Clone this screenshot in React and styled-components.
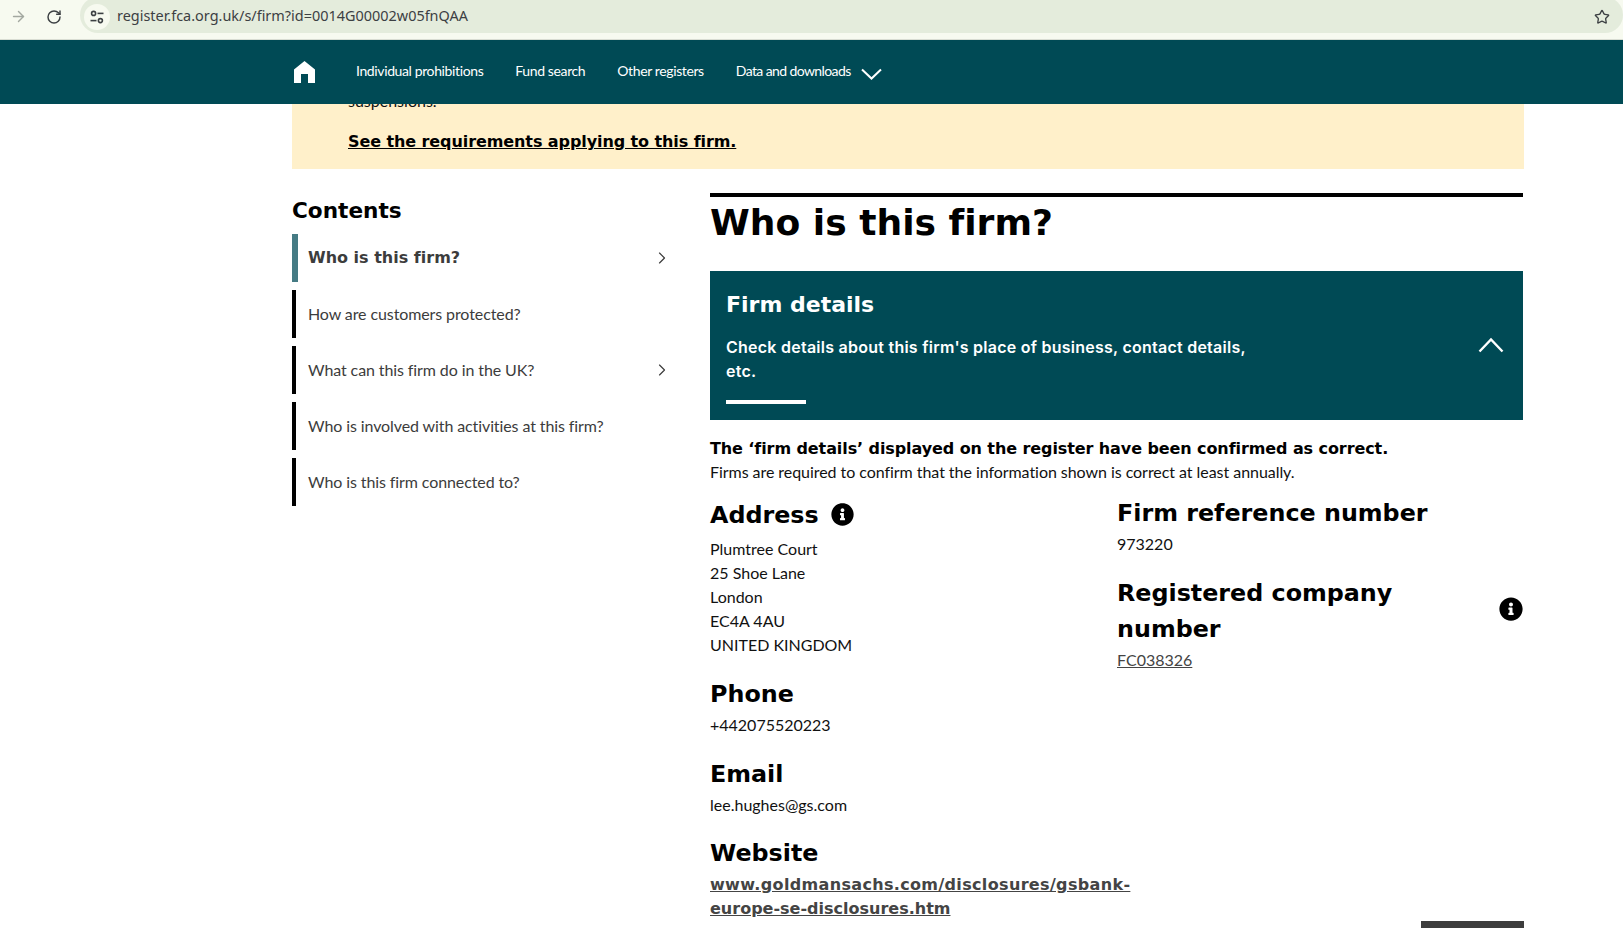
import React from "react"
import styled, { createGlobalStyle, css } from "styled-components"
import { FaInfoCircle } from "react-icons/fa"
import { ArrowRight, ChevronRight, RotateCw, Star } from "lucide-react"

const GlobalStyle = createGlobalStyle`
  html, body {
    margin: 0;
    height: 928px;
    overflow: hidden;
    background: #fff;
  }
`

const wideBold = css`
  font-family: "DejaVu Sans", sans-serif;
  font-weight: bold;
  font-variant-ligatures: none;
`

const Toolbar = styled.div`
  height: 39px;
  background: #f7faf0;
  border-bottom: 1px solid #d9ddd3;
  display: flex;
  align-items: flex-start;
  padding-left: 8px;
`
const ToolButton = styled.div`
  width: 20px;
  height: 33px;
  margin-right: ${(p) => p.$gap}px;
  display: flex;
  align-items: center;
  justify-content: center;
  color: ${(p) => p.$color};
`
const Omnibox = styled.div`
  flex: 1;
  height: 36px;
  box-sizing: border-box;
  margin-top: -3px;
  background: #e4ecdc;
  border-radius: 18px;
  display: flex;
  align-items: center;
  padding: 3px 13px 0 4px;
`
const TuneBadge = styled.div`
  width: 26px;
  height: 26px;
  border-radius: 50%;
  background: #f7faf0;
  display: flex;
  align-items: center;
  justify-content: center;
  margin-right: 7px;
`
const Url = styled.span`
  flex: 1;
  margin-top: -2px;
  font: 14.45px "Noto Sans", sans-serif;
  color: #3c4043;
`

const Nav = styled.nav`
  height: 64px;
  background: #004a55;
  display: flex;
  align-items: center;
  padding-left: 294px;
`
const HomeLink = styled.a`
  display: flex;
  width: 62px;
`
const NavItem = styled.a`
  font: 14px/20px Lato, sans-serif;
  color: #fff;
  margin-right: 32px;
  margin-top: -2px;
  letter-spacing: ${(p) => (p.$tight ? "-0.6px" : "-0.38px")};
`
const NavChevron = styled.svg`
  margin-left: -22px;
  margin-top: 4px;
`

const Page = styled.div`
  width: 1232px;
  margin-left: 292px;
`
const Banner = styled.div`
  height: 65px;
  background: #fff0ca;
  overflow: hidden;
  padding-left: 56px;
`
const BannerText = styled.div`
  font: 16px/24px Lato, sans-serif;
  color: #111;
  margin-top: -15px;
`
const BannerLink = styled.a`
  display: block;
  margin-top: 17px;
  ${wideBold}
  font-size: 16px;
  line-height: 24px;
  letter-spacing: -0.09px;
  color: #000;
  text-decoration: underline;
`

const Columns = styled.div`
  display: grid;
  grid-template-columns: 418px 813px;
`
const Sidebar = styled.aside`
  padding-top: 27px;
`
const ContentsTitle = styled.h2`
  margin: 0 0 8px;
  ${wideBold}
  font-size: 21.6px;
  line-height: 30px;
  color: #000;
`
const SideList = styled.div`
  width: 380px;
  display: flex;
  flex-direction: column;
  gap: 8px;
`
const SideItem = styled.a`
  height: 48px;
  box-sizing: border-box;
  display: flex;
  align-items: center;
  justify-content: space-between;
  border-left: ${(p) => (p.$active ? "6px solid #457b84" : "4px solid #000")};
  padding-left: ${(p) => (p.$active ? 10 : 12)}px;
  color: #3c3c3c;
  ${(p) =>
    p.$active
      ? css`
          ${wideBold}
          font-size: 16px;
          line-height: 26px;
        `
      : css`
          font: 16px/24px Lato, sans-serif;
          letter-spacing: -0.1px;
        `}
`

const Main = styled.main`
  margin-top: 24px;
  border-top: 4px solid #000;
`
const PageTitle = styled.h1`
  margin: 0 0 22px;
  ${wideBold}
  font-size: 36.1px;
  line-height: 52px;
  color: #000;
`
const Panel = styled.section`
  height: 149px;
  box-sizing: border-box;
  background: #004a55;
  color: #fff;
  display: flex;
  align-items: center;
  justify-content: space-between;
  padding: 19px 19px 16px 16px;
`
const PanelText = styled.div`
  width: 540px;
`
const PanelTitle = styled.h2`
  margin: 0;
  ${wideBold}
  font-size: 22px;
  line-height: 30px;
`
const PanelBlurb = styled.p`
  margin: 15px 0 0;
  font: 600 16px/24px Inter, sans-serif;
  letter-spacing: 0.25px;
`
const PanelRule = styled.div`
  width: 80px;
  height: 4px;
  margin-top: 17px;
  background: #fff;
`
const PanelChevron = styled.svg`
  margin-bottom: 5px;
`
const Intro = styled.div`
  margin: 17px 0 12px;
`
const IntroStrong = styled.div`
  ${wideBold}
  font-size: 16px;
  line-height: 24px;
  letter-spacing: -0.09px;
  color: #000;
  margin-bottom: -1px;
`
const IntroNote = styled.div`
  font: 16px/24px Lato, sans-serif;
  letter-spacing: -0.05px;
  color: #111;
`
const DetailGrid = styled.div`
  display: grid;
  grid-template-columns: 407px 406px;
`
const DetailColumn = styled.div`
  margin-top: ${(p) => p.$offset}px;
`
const Field = styled.div`
  margin-bottom: ${(p) => p.$bottom || 19}px;
`
const FieldHeading = styled.h3`
  margin: 0;
  ${wideBold}
  font-size: 23.8px;
  line-height: 36px;
  color: #000;
  display: flex;
  align-items: center;
  gap: ${(p) => p.$gap || 0}px;
  justify-content: ${(p) => (p.$spread ? "space-between" : "flex-start")};
`
const InfoIcon = styled(FaInfoCircle)`
  margin-bottom: ${(p) => p.$lift}px;
`
const FieldValue = styled.div`
  margin-top: ${(p) => p.$top || 1}px;
  font: 16px/24px Lato, sans-serif;
  color: #111;
`
const ValueLink = styled.a`
  color: #444;
  text-decoration: underline;
`
const WebLink = styled.a`
  display: block;
  margin-top: 2px;
  ${wideBold}
  font-size: 16px;
  line-height: 24px;
  color: #444;
  text-decoration: underline;
`
const WebLine = styled.span`
  display: block;
  letter-spacing: ${(p) => p.$spacing || 0}px;
`
const BackToTop = styled.div`
  position: fixed;
  left: 1421px;
  top: 921px;
  width: 103px;
  height: 7px;
  background: #3d3d3d;
`

const sideItems = [
  { label: "Who is this firm?", active: true, more: true },
  { label: "How are customers protected?" },
  { label: "What can this firm do in the UK?", more: true },
  { label: "Who is involved with activities at this firm?" },
  { label: "Who is this firm connected to?" },
]

const TuneIcon = () => (
  <svg width="14" height="14" viewBox="0 0 14 14" fill="none" stroke="#3c4043" strokeWidth="1.6">
    <circle cx="3.6" cy="3.4" r="2" />
    <path d="M7.5 3.4h6" />
    <circle cx="10.4" cy="10.6" r="2" />
    <path d="M0.5 10.6h6" />
  </svg>
)

const HomeIcon = () => (
  <svg width="21" height="22" viewBox="0 0 21 22" fill="#fff">
    <path d="M10.5 0 L21 8.5 V22 H14 V13 H7 V22 H0 V8.5 Z" />
  </svg>
)

const App = () => {
  return (
    <>
      <GlobalStyle />
      <Toolbar>
        <ToolButton $gap={16} $color="#a3a8a0">
          <ArrowRight size={17} strokeWidth={2} />
        </ToolButton>
        <ToolButton $gap={16} $color="#3c4043">
          <RotateCw size={16} strokeWidth={2.2} />
        </ToolButton>
        <Omnibox>
          <TuneBadge>
            <TuneIcon />
          </TuneBadge>
          <Url>register.fca.org.uk/s/firm?id=0014G00002w05fnQAA</Url>
          <Star size={16} strokeWidth={2} color="#3c4043" />
        </Omnibox>
      </Toolbar>
      <Nav>
        <HomeLink>
          <HomeIcon />
        </HomeLink>
        <NavItem>Individual prohibitions</NavItem>
        <NavItem>Fund search</NavItem>
        <NavItem>Other registers</NavItem>
        <NavItem $tight>Data and downloads</NavItem>
        <NavChevron width="21" height="12" viewBox="0 0 21 12" fill="none" stroke="#fff" strokeWidth="2">
          <path d="M1 1.5 L10.5 10.5 L20 1.5" />
        </NavChevron>
      </Nav>
      <Page>
        <Banner>
          <BannerText>suspensions.</BannerText>
          <BannerLink>See the requirements applying to this firm.</BannerLink>
        </Banner>
        <Columns>
          <Sidebar>
            <ContentsTitle>Contents</ContentsTitle>
            <SideList>
              {sideItems.map((item) => (
                <SideItem key={item.label} $active={item.active}>
                  {item.label}
                  {item.more && <ChevronRight size={20} strokeWidth={1.4} color="#3c3c3c" />}
                </SideItem>
              ))}
            </SideList>
          </Sidebar>
          <Main>
            <PageTitle>Who is this firm?</PageTitle>
            <Panel>
              <PanelText>
                <PanelTitle>Firm details</PanelTitle>
                <PanelBlurb>Check details about this firm's place of business, contact details, etc.</PanelBlurb>
                <PanelRule />
              </PanelText>
              <PanelChevron width="26" height="16" viewBox="0 0 26 16" fill="none" stroke="#fff" strokeWidth="2.4">
                <path d="M1.5 14.5 L13 2.5 L24.5 14.5" />
              </PanelChevron>
            </Panel>
            <Intro>
              <IntroStrong>The ‘firm details’ displayed on the register have been confirmed as correct.</IntroStrong>
              <IntroNote>Firms are required to confirm that the information shown is correct at least annually.</IntroNote>
            </Intro>
            <DetailGrid>
              <DetailColumn $offset={1}>
                <Field>
                  <FieldHeading $gap={12}>
                    Address <InfoIcon size={23} $lift={2} />
                  </FieldHeading>
                  <FieldValue $top={4}>
                    Plumtree Court
                    <br />
                    25 Shoe Lane
                    <br />
                    London
                    <br />
                    EC4A 4AU
                    <br />
                    UNITED KINGDOM
                  </FieldValue>
                </Field>
                <Field>
                  <FieldHeading>Phone</FieldHeading>
                  <FieldValue>+442075520223</FieldValue>
                </Field>
                <Field $bottom={18}>
                  <FieldHeading>Email</FieldHeading>
                  <FieldValue>lee.hughes@gs.com</FieldValue>
                </Field>
                <Field>
                  <FieldHeading>Website</FieldHeading>
                  <WebLink>
                    <WebLine $spacing={0.34}>www.goldmansachs.com/disclosures/gsbank-</WebLine>
                    <WebLine>europe-se-disclosures.htm</WebLine>
                  </WebLink>
                </Field>
              </DetailColumn>
              <DetailColumn $offset={-1}>
                <Field>
                  <FieldHeading>Firm reference number</FieldHeading>
                  <FieldValue>973220</FieldValue>
                </Field>
                <Field>
                  <FieldHeading $spread>
                    <span>
                      Registered company
                      <br />
                      number
                    </span>
                    <InfoIcon size={24} $lift={4} />
                  </FieldHeading>
                  <FieldValue>
                    <ValueLink>FC038326</ValueLink>
                  </FieldValue>
                </Field>
              </DetailColumn>
            </DetailGrid>
          </Main>
        </Columns>
      </Page>
      <BackToTop />
    </>
  )
}

export default App
